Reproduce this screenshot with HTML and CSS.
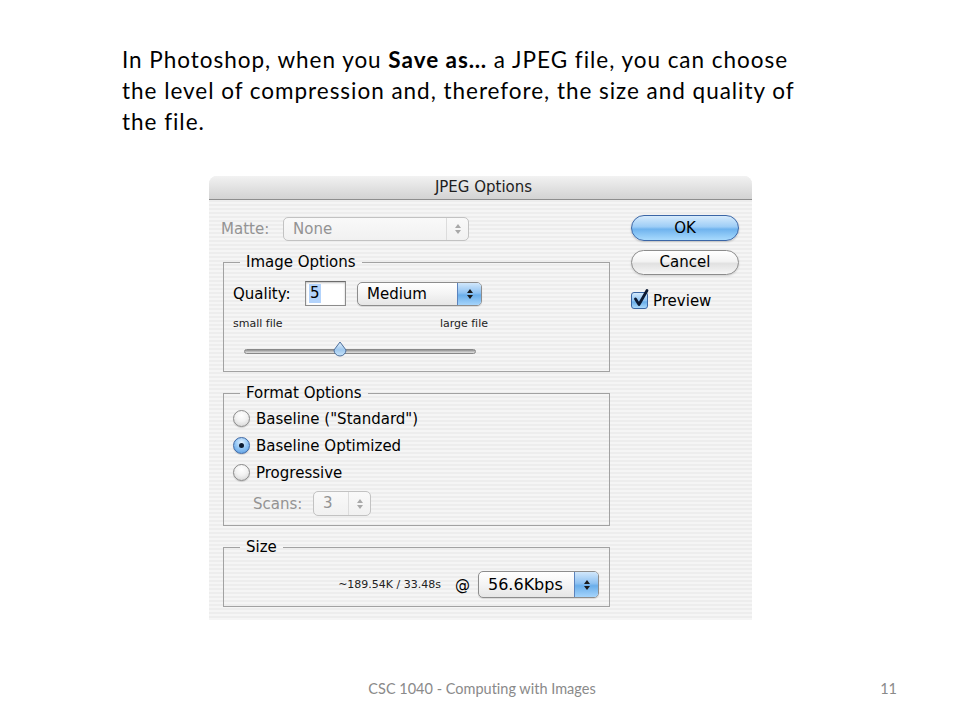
FILE: index.html
```html
<!DOCTYPE html>
<html lang="en">
<head>
<meta charset="utf-8">
<title>JPEG Options</title>
<link rel="stylesheet" href="styles.css">
</head>
<body>
<div class="slide">
  <p class="intro">In Photoshop, when you <b>Save as…</b> a JPEG file, you can choose<br>the level of compression and, therefore, the size and quality of<br>the file.</p>

  <div class="dialog">
    <div class="titlebar">JPEG Options</div>
    <div class="dialog-body">
      <div class="left-col">
        <div class="matte-row">
          <span class="label disabled matte-label">Matte:</span>
          <div class="popup popup-matte disabled">
            <span class="popup-text">None</span>
            <span class="popup-arrows plain">
              <svg width="10" height="14" viewBox="0 0 10 14"><path d="M5 2 L8 6 H2 Z M5 12 L8 8 H2 Z" fill="#a8a8a8"/></svg>
            </span>
          </div>
        </div>

        <fieldset class="group group-image">
          <legend>Image Options</legend>
          <div class="quality-row">
            <span class="label">Quality:</span>
            <div class="text-input"><span class="selected-text">5</span></div>
            <div class="popup popup-medium">
              <span class="popup-text">Medium</span>
              <span class="popup-arrows blue">
                <svg width="10" height="14" viewBox="0 0 10 14"><path d="M5 2 L8 6 H2 Z M5 12 L8 8 H2 Z" fill="#1a1a1a"/></svg>
              </span>
            </div>
          </div>
          <div class="size-labels">
            <span>small file</span>
            <span>large file</span>
          </div>
          <div class="slider">
            <div class="slider-track"></div>
            <svg class="slider-thumb" width="16" height="17" viewBox="0 0 16 17">
              <defs>
                <linearGradient id="thumbGrad" x1="0" y1="0" x2="0" y2="1">
                  <stop offset="0" stop-color="#e4f1fc"/>
                  <stop offset="0.55" stop-color="#9fc8ee"/>
                  <stop offset="1" stop-color="#c8e4fa"/>
                </linearGradient>
              </defs>
              <path d="M8 1 L14 9 A6 6 0 1 1 2 9 Z" fill="url(#thumbGrad)" stroke="#4d6f9c" stroke-width="1"/>
            </svg>
          </div>
        </fieldset>

        <fieldset class="group group-format">
          <legend>Format Options</legend>
          <div class="radio-row">
            <span class="radio"></span>
            <span class="label">Baseline ("Standard")</span>
          </div>
          <div class="radio-row">
            <span class="radio checked"><span class="radio-dot"></span></span>
            <span class="label">Baseline Optimized</span>
          </div>
          <div class="radio-row">
            <span class="radio"></span>
            <span class="label">Progressive</span>
          </div>
          <div class="scans-row">
            <span class="label disabled">Scans:</span>
            <div class="popup popup-scans disabled">
              <span class="popup-text">3</span>
              <span class="popup-arrows plain">
                <svg width="10" height="14" viewBox="0 0 10 14"><path d="M5 2 L8 6 H2 Z M5 12 L8 8 H2 Z" fill="#a8a8a8"/></svg>
              </span>
            </div>
          </div>
        </fieldset>

        <fieldset class="group group-size">
          <legend>Size</legend>
          <div class="size-row">
            <span class="size-info">~189.54K / 33.48s</span>
            <span class="label at">@</span>
            <div class="popup popup-speed">
              <span class="popup-text">56.6Kbps</span>
              <span class="popup-arrows blue">
                <svg width="10" height="14" viewBox="0 0 10 14"><path d="M5 2 L8 6 H2 Z M5 12 L8 8 H2 Z" fill="#1a1a1a"/></svg>
              </span>
            </div>
          </div>
        </fieldset>
      </div>

      <div class="right-col">
        <div class="button button-default">OK</div>
        <div class="button button-cancel">Cancel</div>
        <div class="check-row">
          <span class="checkbox">
            <svg width="17" height="17" viewBox="0 0 17 17"><path d="M3.5 8 L7 13.5 L15 -0.5" fill="none" stroke="#0d1a33" stroke-width="2.8" stroke-linecap="round" stroke-linejoin="round"/></svg>
          </span>
          <span class="label">Preview</span>
        </div>
      </div>
    </div>
  </div>

  <footer class="footer">
    <span class="footer-spacer"></span>
    <span class="footer-title">CSC 1040 - Computing with Images</span>
    <span class="page-num">11</span>
  </footer>
</div>
</body>
</html>
```

FILE: styles.css
```css
* { box-sizing: border-box; }

html, body {
  margin: 0;
  padding: 0;
  background: #ffffff;
}

.slide {
  width: 960px;
  height: 720px;
  padding-top: 44px;
  font-family: Lato, "Open Sans", sans-serif;
  font-variant-ligatures: none;
  overflow: hidden;
}

.intro {
  margin: 0 0 0 122px;
  font-size: 22.5px;
  line-height: 31px;
  letter-spacing: 0.97px;
  color: #000;
}

.intro b { font-weight: 700; }

/* ---------- dialog ---------- */
.dialog {
  margin: 39px 0 0 209px;
  width: 543px;
  height: 444px;
  border-radius: 8px 8px 0 0;
  overflow: hidden;
  background: repeating-linear-gradient(to bottom, #ededed 0, #ededed 2px, #f5f5f5 2px, #f5f5f5 4px);
  font-family: "DejaVu Sans", Verdana, sans-serif;
  font-size: 15px;
  color: #000;
}

.titlebar {
  height: 24px;
  line-height: 23px;
  text-align: center;
  color: #1e1e1e;
  background: linear-gradient(to bottom, #f2f2f2 0%, #e2e2e2 50%, #d3d3d3 100%);
  border-bottom: 1px solid #8e8e8e;
  padding-left: 6px;
}

.dialog-body {
  display: grid;
  grid-template-columns: 387px 108px;
  column-gap: 21px;
  padding: 0 13px 0 14px;
}

.label { white-space: nowrap; }
.disabled, .label.disabled { color: #939393; }

/* popup menus */
.popup {
  display: flex;
  align-items: stretch;
  height: 24px;
  border: 1px solid #8d8d8d;
  border-radius: 5px;
  overflow: hidden;
  background: linear-gradient(to bottom, #ffffff 0%, #f4f4f4 50%, #e6e6e6 100%);
  box-shadow: 0 1px 1px rgba(0,0,0,0.12);
}

.popup.disabled {
  border-color: #c2c2c2;
  background: linear-gradient(to bottom, #f9f9f9 0%, #f1f1f1 100%);
  box-shadow: none;
}

.popup-text {
  flex: 1;
  padding-left: 9px;
  line-height: 22px;
  white-space: nowrap;
}

.popup-arrows {
  width: 24px;
  display: flex;
  align-items: center;
  justify-content: center;
}

.popup-arrows.blue {
  border-left: 1px solid #5b83bd;
  background: linear-gradient(to bottom, #d1e7fb 0%, #8fc2f2 45%, #6aaeea 55%, #a5d4fb 100%);
}

.popup-arrows.plain {
  width: 22px;
  border-left: 1px solid #dcdcdc;
}

/* matte row */
.matte-row {
  display: flex;
  align-items: center;
  margin-top: 17px;
  margin-left: -2px;
  height: 24px;
}

.matte-label { width: 62px; }

.popup-matte { width: 186px; }

/* group boxes */
.group {
  margin: 12px 0 0 0;
  padding: 0 9px;
  border: 1px solid #a2a2a2;
  min-width: 0;
}

.group legend {
  margin-left: 7px;
  padding: 0 6px 0 6px;
  line-height: 18px;
  font-size: 15px;
}

.group-image { padding-top: 10px; padding-bottom: 13px; }

.quality-row {
  display: flex;
  align-items: center;
  height: 25px;
}

.quality-row .label { width: 72px; }

.text-input {
  width: 41px;
  height: 25px;
  background: #ffffff;
  border: 1px solid #8c8c8c;
  border-top-color: #6c6c6c;
  box-shadow: inset 0 1px 2px rgba(0,0,0,0.25);
  padding: 2px 0 0 3px;
  line-height: 19px;
}

.selected-text {
  display: inline-block;
  background: #b3d3fb;
  padding: 0 1px;
}

.popup-medium {
  width: 125px;
  margin-left: 11px;
}

.size-labels {
  display: flex;
  justify-content: space-between;
  width: 255px;
  margin-top: 11px;
  height: 14px;
  line-height: 14px;
  font-size: 11px;
  color: #222;
}

.slider {
  position: relative;
  margin: 10px 0 0 11px;
  width: 232px;
  height: 17px;
}

.slider-track {
  position: absolute;
  left: 0;
  right: 0;
  top: 8px;
  height: 5px;
  border-radius: 3px;
  background: linear-gradient(to bottom, #8f8f8f 0%, #bdbdbd 50%, #e2e2e2 100%);
  border: 1px solid #888;
}

.slider-thumb {
  position: absolute;
  left: 88px;
  top: 0;
}

/* format options */
.group-format { padding-top: 3px; padding-bottom: 9px; }

.radio-row {
  display: flex;
  align-items: center;
  height: 27px;
}

.radio {
  width: 17px;
  height: 17px;
  border-radius: 50%;
  margin-right: 6px;
  border: 1px solid #8a8a8a;
  background: radial-gradient(circle at 50% 30%, #ffffff 0%, #f2f2f2 45%, #cfcfcf 100%);
  box-shadow: 0 1px 1px rgba(0,0,0,0.15);
  display: flex;
  align-items: center;
  justify-content: center;
}

.radio.checked {
  border-color: #3f68a4;
  background: radial-gradient(circle at 50% 30%, #e4f2fe 0%, #8fc3f3 50%, #5297e0 100%);
}

.radio-dot {
  width: 5px;
  height: 5px;
  border-radius: 50%;
  background: #0c1a30;
}

.scans-row {
  display: flex;
  align-items: center;
  height: 25px;
  margin-top: 5px;
  padding-left: 20px;
}

.scans-row .label { width: 60px; }

.popup-scans { width: 58px; height: 25px; }

/* size group */
.group-size { padding-top: 15px; padding-bottom: 8px; }

.size-row {
  display: flex;
  align-items: center;
  justify-content: flex-end;
  height: 27px;
  padding-right: 1px;
}

.size-info {
  font-size: 11px;
  color: #222;
  margin-right: 14px;
}

.at { margin-right: 8px; }

.popup-speed { width: 121px; height: 27px; }
.popup-speed .popup-text { line-height: 25px; font-size: 16px; }

/* right column */
.right-col {
  display: flex;
  flex-direction: column;
}

.button {
  height: 26px;
  border-radius: 13px;
  text-align: center;
  line-height: 24px;
  font-size: 15px;
}

.button-default {
  margin-top: 15px;
  border: 1px solid #3b66a6;
  background: linear-gradient(to bottom, #d7ebfc 0%, #9dcdf6 45%, #6fb3ee 55%, #a8dafd 100%);
  box-shadow: 0 1px 2px rgba(0,0,0,0.2);
}

.button-cancel {
  margin-top: 9px;
  height: 25px;
  line-height: 23px;
  border: 1px solid #8c8c8c;
  background: linear-gradient(to bottom, #ffffff 0%, #f3f3f3 45%, #e1e1e1 55%, #f6f6f6 100%);
  box-shadow: 0 1px 2px rgba(0,0,0,0.15);
}

.check-row {
  display: flex;
  align-items: center;
  margin-top: 17px;
  height: 17px;
}

.checkbox {
  width: 17px;
  height: 17px;
  border-radius: 3px;
  border: 1px solid #3a65a3;
  background: linear-gradient(to bottom, #d4eafd 0%, #8fc4f3 50%, #6aaee9 60%, #a9d8fb 100%);
  margin-right: 5px;
  display: flex;
  align-items: center;
  justify-content: center;
  overflow: visible;
}

.checkbox svg { overflow: visible; margin-top: -2px; margin-left: 1px; }

/* footer */
.footer {
  display: grid;
  grid-template-columns: 1fr auto 1fr;
  align-items: center;
  margin-top: 58px;
  height: 20px;
  font-size: 14.5px;
  color: #8a8a8a;
}

.footer-title { padding-left: 4px; }

.page-num {
  justify-self: end;
  padding-right: 63px;
}
```
